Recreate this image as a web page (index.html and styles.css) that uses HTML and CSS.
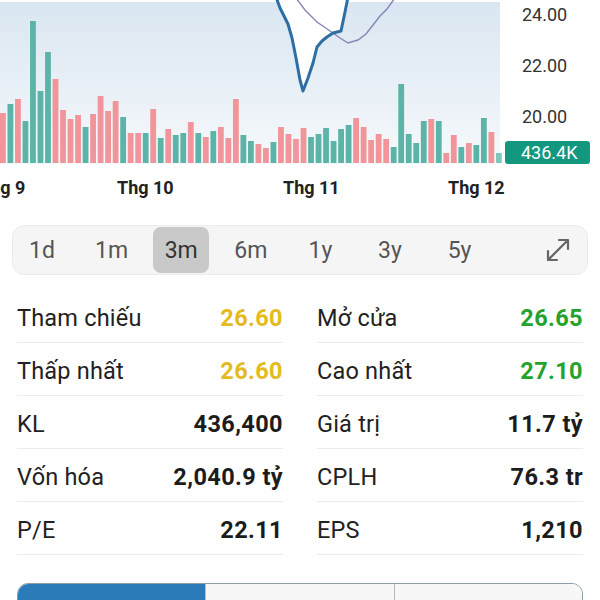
FILE: index.html
```html
<!DOCTYPE html>
<html lang="vi">
<head>
<meta charset="utf-8">
<title>Chart</title>
<link rel="stylesheet" href="styles.css">
</head>
<body>
<div class="chart">
  <svg class="plot" width="505" height="170" viewBox="0 0 505 170">
    <defs>
      <linearGradient id="bg" x1="0" y1="0" x2="0" y2="1">
        <stop offset="0" stop-color="#d9e6f1"/>
        <stop offset="1" stop-color="#f6f9fb"/>
      </linearGradient>
    </defs>
    <path d="M0,2 L277,2 L280,8 L284,16 L288,24 L292,38 L296,58 L300,80 L303,91 L308,78 L313,63 L317,47 L322,41 L327,37 L333,33 L341,31 L345,12 L347,2 L500,2 L500,164 L0,164 Z" fill="url(#bg)"/>
    <g id="bars"></g>
    <path d="M296,-2 L305,10 L317,22 L333,33 L340,38 L348,43 L358,40 L366,34 L373,25 L380,16 L387,9 L395,-2" fill="none" stroke="#8a84b4" stroke-width="1.4"/>
    <path d="M276,-3 L280,8 L284,16 L288,24 L292,38 L296,58 L300,80 L303,91 L308,78 L313,63 L317,47 L322,41 L327,37 L333,33 L341,31 L345,12 L348,-3" fill="none" stroke="#2d6ea5" stroke-width="3" stroke-linejoin="round"/>
  </svg>
  <div class="yaxis">
    <div class="ylabel">24.00</div>
    <div class="ylabel">22.00</div>
    <div class="ylabel">20.00</div>
    <div class="badge">436.4K</div>
  </div>
</div>
<div class="xaxis">
  <span class="tick t9">Thg 9</span>
  <span class="tick t10">Thg 10</span>
  <span class="tick t11">Thg 11</span>
  <span class="tick t12">Thg 12</span>
</div>
<div class="periods">
  <span class="period">1d</span>
  <span class="period">1m</span>
  <span class="period active">3m</span>
  <span class="period">6m</span>
  <span class="period">1y</span>
  <span class="period">3y</span>
  <span class="period">5y</span>
  <span class="expand">
    <svg width="26" height="26" viewBox="0 0 26 26">
      <path d="M3,23 L23,3 M14,3 L23,3 L23,12 M3,14 L3,23 L12,23" fill="none" stroke="#666" stroke-width="2.2" stroke-linecap="round" stroke-linejoin="round"/>
    </svg>
  </span>
</div>
<div class="stats">
  <div class="row"><span class="label">Tham chiếu</span><span class="value ref">26.60</span></div>
  <div class="row"><span class="label">Mở cửa</span><span class="value up">26.65</span></div>
  <div class="row"><span class="label">Thấp nhất</span><span class="value ref">26.60</span></div>
  <div class="row"><span class="label">Cao nhất</span><span class="value up">27.10</span></div>
  <div class="row"><span class="label">KL</span><span class="value">436,400</span></div>
  <div class="row"><span class="label">Giá trị</span><span class="value">11.7 tỷ</span></div>
  <div class="row"><span class="label">Vốn hóa</span><span class="value">2,040.9 tỷ</span></div>
  <div class="row"><span class="label">CPLH</span><span class="value">76.3 tr</span></div>
  <div class="row"><span class="label">P/E</span><span class="value">22.11</span></div>
  <div class="row"><span class="label">EPS</span><span class="value">1,210</span></div>
</div>
<div class="tabs">
  <div class="tab on"></div>
  <div class="tab"></div>
  <div class="tab"></div>
</div>
<script src="chart.js"></script>
</body>
</html>
```
FILE: chart.js
```js
(function () {
  var data = [
    [113,'p'],[104,'t'],[99,'p'],[121,'t'],[21,'t'],[91,'t'],[52,'t'],[79,'p'],[110,'p'],[119,'p'],
    [115,'p'],[127,'t'],[114,'p'],[96,'p'],[111,'p'],[101,'p'],[117,'t'],[133,'p'],[133,'p'],[133,'t'],
    [109,'p'],[138,'t'],[129,'p'],[135,'t'],[133,'t'],[122,'p'],[133,'t'],[137,'p'],[131,'t'],[127,'p'],
    [138,'p'],[99,'p'],[135,'t'],[141,'t'],[144,'p'],[148,'p'],[142,'t'],[127,'p'],[134,'p'],[139,'p'],
    [128,'p'],[137,'t'],[134,'t'],[128,'t'],[141,'t'],[129,'t'],[125,'t'],[118,'p'],[127,'p'],[140,'p'],
    [134,'p'],[139,'p'],[147,'t'],[84,'t'],[134,'t'],[143,'t'],[121,'t'],[119,'p'],[121,'t'],[153,'p'],
    [135,'p'],[147,'t'],[143,'p'],[145,'t'],[118,'t'],[132,'p'],[153,'t']
  ];
  var g = document.getElementById('bars');
  var ns = 'http://www.w3.org/2000/svg';
  var pitch = 7.515, w = 5.8, bottom = 163;
  data.forEach(function (d, i) {
    var r = document.createElementNS(ns, 'rect');
    r.setAttribute('x', (i * pitch).toFixed(2));
    r.setAttribute('y', d[0]);
    r.setAttribute('width', w);
    r.setAttribute('height', bottom - d[0]);
    r.setAttribute('fill', d[1] === 'p' ? '#f1959a' : '#5bb4a7');
    if (i === data.length - 1) r.setAttribute('fill-opacity', '0.75');
    g.appendChild(r);
  });
})();
```
FILE: styles.css
```css
* { box-sizing: border-box; }
html, body { margin: 0; padding: 0; background: #fff; }
body {
  width: 600px;
  height: 600px;
  overflow: hidden;
  font-family: Roboto, "Noto Sans", "Liberation Sans", sans-serif;
  color: #222;
}
.chart {
  display: flex;
  height: 170px;
}
.plot { display: block; flex: none; }
.yaxis {
  flex: none;
  width: 95px;
  padding-top: 4px;
}
.ylabel {
  height: 51px;
  line-height: 22px;
  padding-left: 17px;
  font-size: 18px;
  color: #333;
}
.ylabel:nth-child(3) { height: 22px; }
.badge {
  margin-top: 13px;
  width: 85px;
  height: 23px;
  line-height: 23px;
  background: #13977f;
  color: #fff;
  font-size: 18px;
  border-radius: 3px;
  padding-left: 16px;
}
.xaxis {
  position: relative;
  height: 36px;
}
.tick {
  position: absolute;
  top: 7px;
  font-size: 18px;
  font-weight: 700;
  color: #222;
  line-height: 22px;
  white-space: nowrap;
}
.t9 { left: -21px; }
.t10 { left: 117px; }
.t11 { left: 283px; }
.t12 { left: 448px; }
.periods {
  margin: 19px 12px 0;
  height: 50px;
  background: #f5f5f5;
  border: 1px solid #ececec;
  border-radius: 12px;
  display: flex;
  align-items: center;
  padding-left: 1px;
  gap: 13.6px;
}
.period {
  width: 56px;
  height: 46px;
  display: flex;
  align-items: center;
  justify-content: center;
  font-size: 23px;
  color: #555;
  border-radius: 8px;
}
.period.active {
  background: #c9c9c9;
  color: #333;
}
.expand {
  margin-left: auto;
  margin-right: 16px;
  display: flex;
}
.stats {
  margin-top: 15px;
  padding: 0 17px;
  display: grid;
  grid-template-columns: 266px 266px;
  column-gap: 34px;
}
.row {
  height: 53px;
  padding-top: 4px;
  border-bottom: 1px solid #ececec;
  display: flex;
  align-items: center;
  justify-content: space-between;
}
.label {
  font-size: 23.5px;
  letter-spacing: 0.2px;
  color: #222;
}
.value {
  font-size: 23.5px;
  letter-spacing: 0.4px;
  font-weight: 700;
  color: #1c1c1c;
}
.value.ref { color: #e4bb1e; }
.value.up { color: #25a22b; }
.tabs {
  margin: 28px 17px 0;
  height: 40px;
  display: flex;
  border: 1.5px solid #8aa0a8;
  border-radius: 11px 11px 0 0;
  overflow: hidden;
}
.tab {
  flex: 1;
  background: #f7f7f7;
  border-left: 1px solid #bbb;
}
.tab:first-child { border-left: none; }
.tab.on {
  background: #2a7bb7;
}
```
